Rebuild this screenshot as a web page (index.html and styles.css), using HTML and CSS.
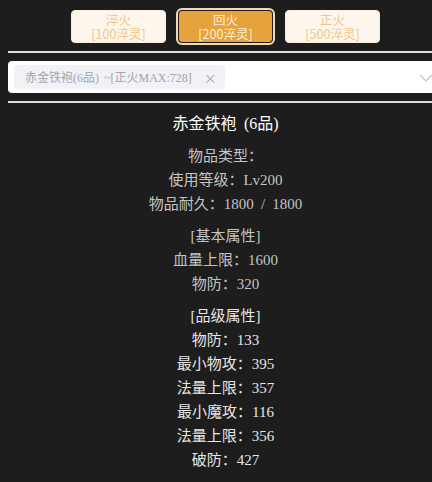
FILE: index.html
```html
<!DOCTYPE html>
<html lang="zh">
<head>
<meta charset="utf-8">
<link rel="stylesheet" href="styles.css">
</head>
<body>
<div class="page">
  <div class="btn-row">
    <button class="btn"><span class="btn-line">淬火</span><span class="btn-line">[100淬灵]</span></button>
    <button class="btn active"><span class="btn-line">回火</span><span class="btn-line">[200淬灵]</span></button>
    <button class="btn"><span class="btn-line">正火</span><span class="btn-line">[500淬灵]</span></button>
  </div>
  <div class="select-band">
    <div class="select">
      <span class="tag">赤金铁袍(6品) ~[正火MAX:728]<span class="tag-close">×</span></span>
      <svg class="chevron" width="14" height="8" viewBox="0 0 14 8"><path d="M1 1 L7 7 L13 1" fill="none" stroke="#c0c4cc" stroke-width="1.2"/></svg>
    </div>
  </div>
  <div class="info">
    <div class="title">赤金铁袍 (6品)</div>
    <div class="group muted">
      <div>物品类型：</div>
      <div>使用等级：Lv200</div>
      <div>物品耐久：1800 / 1800</div>
    </div>
    <div class="group muted">
      <div>[基本属性]</div>
      <div>血量上限：1600</div>
      <div>物防：320</div>
    </div>
    <div class="group bright">
      <div>[品级属性]</div>
      <div>物防：133</div>
      <div>最小物攻：395</div>
      <div>法量上限：357</div>
      <div>最小魔攻：116</div>
      <div>法量上限：356</div>
      <div>破防：427</div>
    </div>
  </div>
</div>
</body>
</html>
```
FILE: styles.css
```css
html {
  overflow: hidden;
  background: #1d1d1d;
}
body {
  margin: 8px;
  width: 435px;
  background: #1d1d1d;
  font-family: "Noto Sans CJK SC", sans-serif;
}
.btn-row {
  display: flex;
  justify-content: center;
  gap: 12px;
  margin-top: 2px;
  margin-bottom: 8px;
}
.btn {
  width: 95px;
  height: 33px;
  padding: 0;
  box-sizing: border-box;
  border: 1px solid #faecd8;
  border-radius: 4px;
  background: #fdf6ec;
  color: #f0c78a;
  font-family: "Noto Sans CJK SC", sans-serif;
  font-size: 12.5px;
  line-height: 14px;
  display: flex;
  flex-direction: column;
  align-items: center;
  justify-content: center;
}
.btn-line {
  display: block;
  height: 14px;
  line-height: 14px;
}
.btn.active {
  background: #e6a23c;
  border-color: #1d1d1d;
  color: #fdf1de;
  outline: 2px solid #f5dab1;
  outline-offset: 0;
}
.select-band {
  border-top: 2px solid #dedede;
  border-bottom: 2px solid #dedede;
  padding: 8px 0;
}
.select {
  height: 32px;
  box-sizing: border-box;
  background: #fff;
  border-radius: 4px;
  display: flex;
  align-items: center;
  padding: 0 10px 0 6px;
}
.tag {
  height: 24px;
  display: flex;
  align-items: center;
  background: #f0f2f5;
  border-radius: 4px;
  padding: 0 8px 0 11px;
  color: #a3a5aa;
  font-family: "Liberation Serif", "Noto Sans CJK SC", serif;
  font-size: 12px;
  word-spacing: 2px;
}
.tag-close {
  margin-left: 12px;
  font-family: "Noto Sans CJK SC", sans-serif;
  font-size: 13px;
  color: #a3a5aa;
}
.chevron {
  margin-left: auto;
  margin-top: 2px;
}
.info {
  text-align: center;
  font-family: "Liberation Serif", "Noto Sans CJK SC", serif;
  font-size: 15px;
  line-height: 24px;
  word-spacing: 3.5px;
  padding-top: 9px;
}
.title {
  color: #ffffff;
  font-size: 16px;
}
.group {
  margin-top: 8px;
}
.muted {
  color: #c4c4c4;
}
.bright {
  color: #e6e6e6;
}
```
